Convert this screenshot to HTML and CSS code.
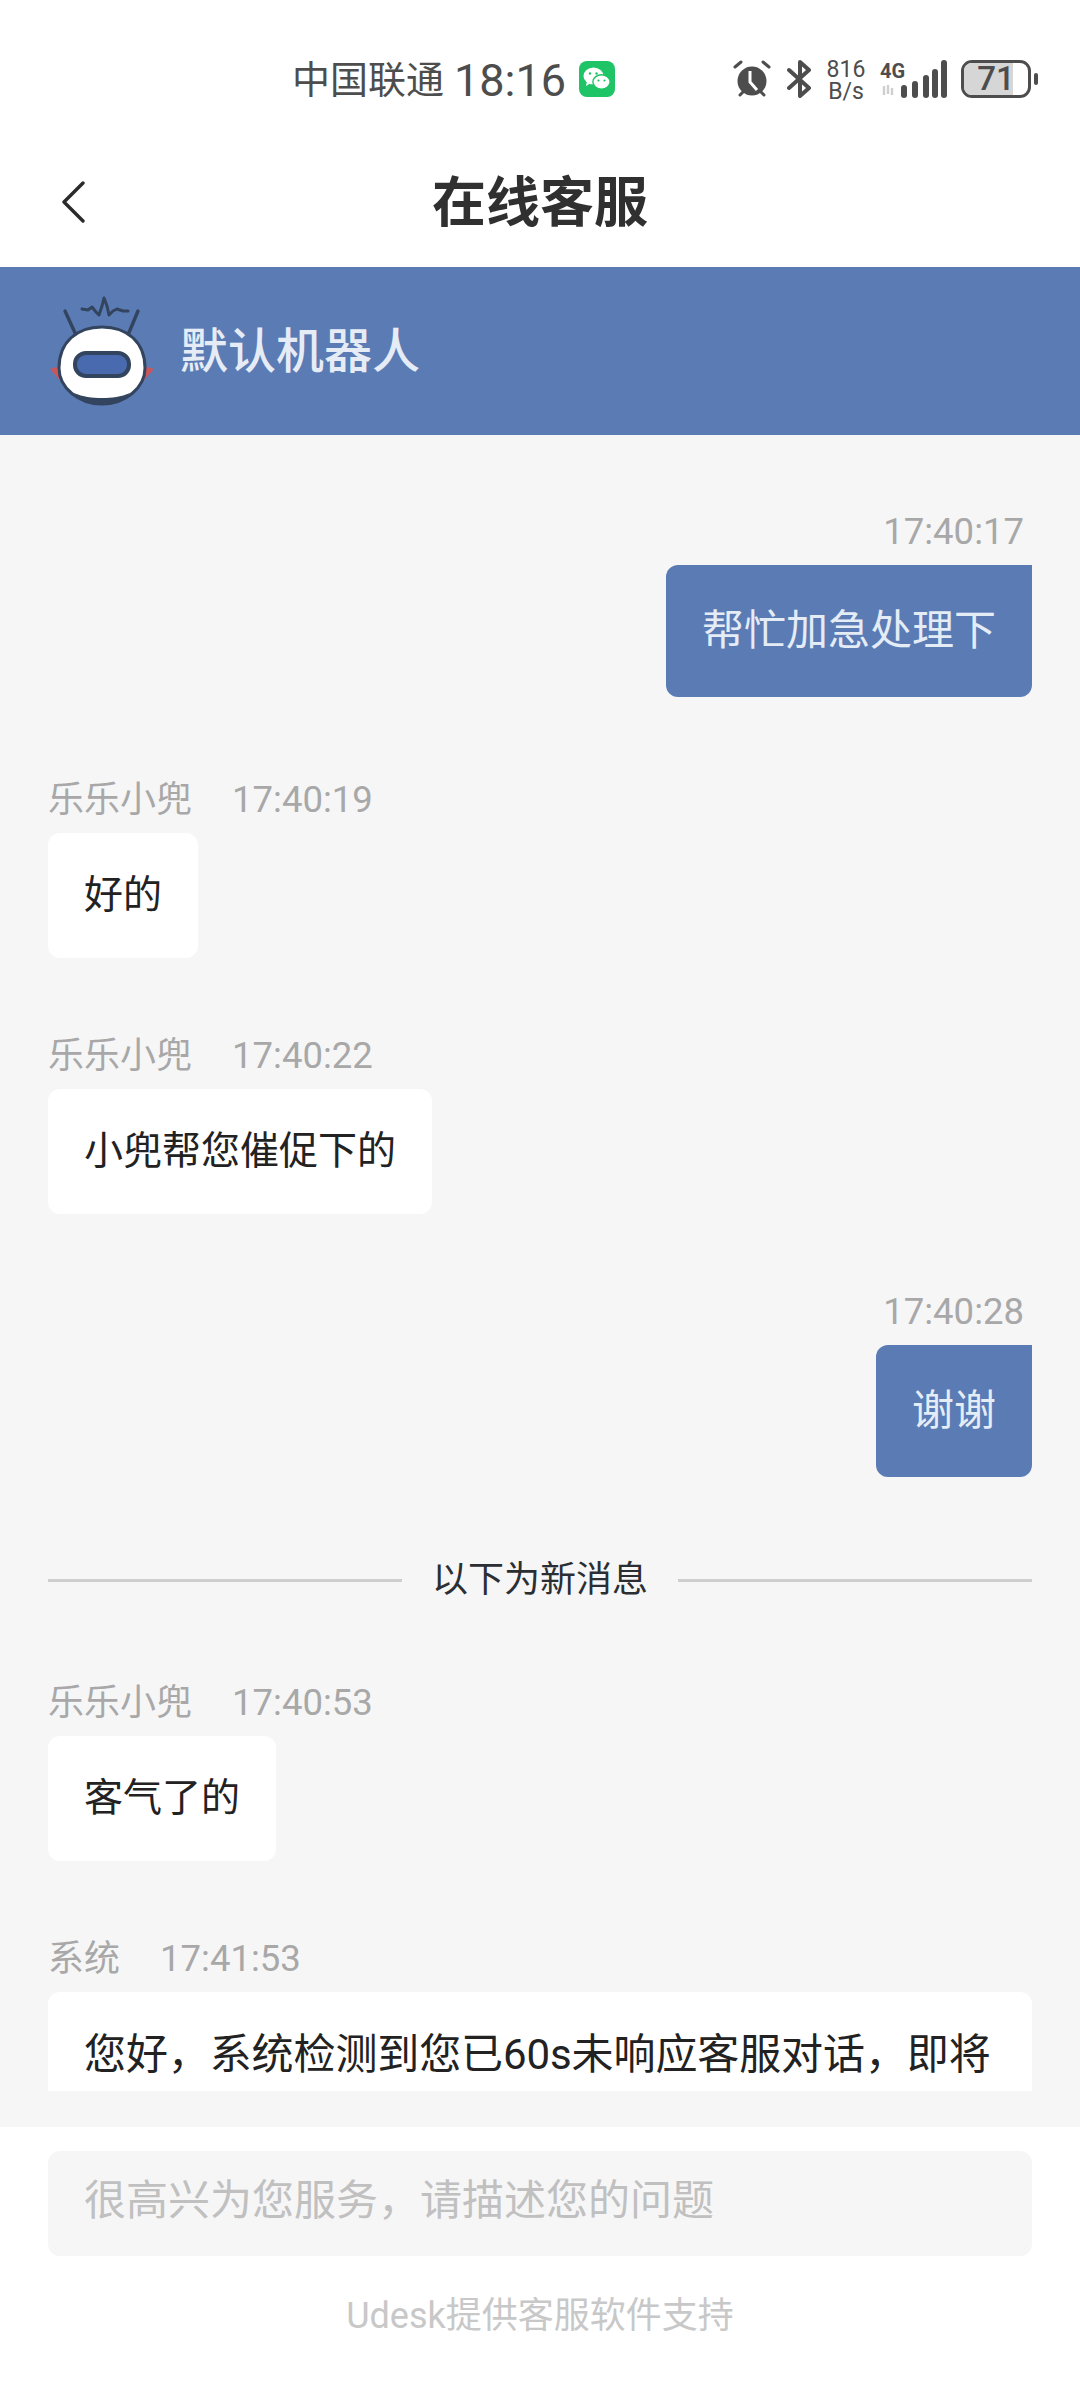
FILE: index.html
```html
<!DOCTYPE html>
<html lang="zh-CN">
<head>
    <meta charset="UTF-8">
    <meta name="viewport" content="width=device-width, initial-scale=1.0">
    <title>在线客服</title>
    <link rel="stylesheet" href="styles.css">
</head>
<body>
    <div class="page">
        <div class="status-bar">
            <span class="carrier">中国联通</span>
            <span class="clock">18:16</span>
            <svg class="wechat" viewBox="0 0 36 36">
                <rect width="36" height="36" rx="8" fill="#1fc466"/>
                <ellipse cx="14.5" cy="15" rx="10" ry="8.6" fill="#fff"/>
                <path d="M8 20l-1 5 5-3z" fill="#fff"/>
                <ellipse cx="22.5" cy="21" rx="8.6" ry="7.2" fill="#fff" stroke="#1fc466" stroke-width="1.4"/>
                <circle cx="11" cy="12.5" r="1.2" fill="#1fc466"/>
                <circle cx="17.5" cy="12.5" r="1.2" fill="#1fc466"/>
                <circle cx="19.5" cy="19.5" r="1.1" fill="#1fc466"/>
                <circle cx="25.5" cy="19.5" r="1.1" fill="#1fc466"/>
            </svg>
            <div class="status-right">
                <svg class="ic-alarm" viewBox="0 0 38 38">
                    <circle cx="19" cy="21" r="14.5" fill="#4d4d4d"/>
                    <path d="M2 7l6-5M36 7l-6-5M7 35l3-3M31 35l-3-3" stroke="#4d4d4d" stroke-width="3" stroke-linecap="round"/>
                    <path d="M17 11v11l7 8" fill="none" stroke="#fff" stroke-width="3"/>
                </svg>
                <svg class="ic-bt" viewBox="0 0 25 38">
                    <path d="M2 10l20 18-9 8V2l9 8L2 28" fill="none" stroke="#4d4d4d" stroke-width="4" stroke-linejoin="round" stroke-linecap="round"/>
                </svg>
                <div class="speed"><span>816</span><span>B/s</span></div>
                <svg class="ic-signal" viewBox="0 0 68 38">
                    <text x="0" y="18" class="net-label">4G</text>
                    <path d="M4 26v9M8 34l0-9M12 28v7" stroke="#cfcfcf" stroke-width="2.4" fill="none"/>
                    <g fill="none" stroke="#4d4d4d" stroke-width="6" stroke-linecap="round">
                        <path d="M24 28v7"/>
                        <path d="M35 24v11"/>
                        <path d="M46 18v17"/>
                        <path d="M55 12v23"/>
                        <path d="M64 3v32"/>
                    </g>
                </svg>
                <div class="battery">
                    <div class="battery-body">
                        <div class="battery-level"></div>
                        <span class="battery-num">71</span>
                    </div>
                    <div class="battery-nub"></div>
                </div>
            </div>
        </div>

        <div class="nav-bar">
            <svg class="back" viewBox="0 0 24 42">
                <path d="M22 2L3 21l19 19" fill="none" stroke="#2b2b2b" stroke-width="3.4" stroke-linecap="round" stroke-linejoin="round"/>
            </svg>
            <div class="nav-title">在线客服</div>
        </div>

        <div class="agent-bar">
            <svg class="robot" viewBox="0 0 104 110">
                <path d="M15 15l11 24M88 15L78 39" stroke="#33445f" stroke-width="3.4" stroke-linecap="round"/>
                <path d="M32 13l6 1 4-3 4 5 3 3 3-9 2-8 3 8 2 9 4-4 4-2 6 2 5 0" fill="none" stroke="#33445f" stroke-width="3" stroke-linejoin="round" stroke-linecap="round"/>
                <path d="M0 73l11-3 3 19zM104 73l-11-3-3 19z" fill="#c9565a"/>
                <path d="M52 31C27 31 9 46 9 72c0 20 20 36 43 36s43-16 43-36C95 46 77 31 52 31z" fill="#fff" stroke="#33445f" stroke-width="3"/>
                <path d="M24 97c9 9 18 12 28 12s19-3 28-12c-9 4-18 5-28 5s-19-1-28-5z" fill="#33445f"/>
                <rect x="25" y="57" width="54" height="23" rx="11" fill="#4a6ab0" stroke="#33445f" stroke-width="4"/>
            </svg>
            <div class="agent-name">默认机器人</div>
        </div>

        <div class="chat">
            <div class="chat-scroll">
                <div class="msg msg-right">
                    <div class="meta"><span class="time">17:40:17</span></div>
                    <div class="bubble bubble-me">帮忙加急处理下</div>
                </div>
                <div class="msg">
                    <div class="meta"><span class="who">乐乐小兜</span><span class="time">17:40:19</span></div>
                    <div class="bubble">好的</div>
                </div>
                <div class="msg">
                    <div class="meta"><span class="who">乐乐小兜</span><span class="time">17:40:22</span></div>
                    <div class="bubble">小兜帮您催促下的</div>
                </div>
                <div class="msg msg-right">
                    <div class="meta"><span class="time">17:40:28</span></div>
                    <div class="bubble bubble-me">谢谢</div>
                </div>
                <div class="divider"><span>以下为新消息</span></div>
                <div class="msg">
                    <div class="meta"><span class="who">乐乐小兜</span><span class="time">17:40:53</span></div>
                    <div class="bubble">客气了的</div>
                </div>
                <div class="msg msg-wide">
                    <div class="meta"><span class="who">系统</span><span class="time">17:41:53</span></div>
                    <div class="bubble bubble-wide">您好，系统检测到您已60s未响应客服对话，即将</div>
                </div>
            </div>
        </div>

        <div class="footer">
            <div class="input-box">很高兴为您服务，请描述您的问题</div>
            <div class="powered">Udesk提供客服软件支持</div>
        </div>
    </div>
</body>
</html>
```

FILE: styles.css
```css
body {
    margin: 0;
    padding: 0;
    font-family: Roboto, "Noto Sans CJK SC", sans-serif;
    background-color: #fff;
    color: #222;
}
.page {
    width: 1080px;
    height: 2400px;
    display: flex;
    flex-direction: column;
    overflow: hidden;
}
.status-bar {
    height: 120px;
    box-sizing: border-box;
    padding: 38px 42px 0 292px;
    display: flex;
    align-items: center;
    flex-shrink: 0;
    color: #4d4d4d;
}
.carrier {
    font-size: 38px;
    margin-top: -5px;
}
.clock {
    font-size: 45px;
    margin: 2px 0 0 10px;
}
.wechat {
    width: 36px;
    height: 36px;
    margin-left: 13px;
}
.status-right {
    margin-left: auto;
    display: flex;
    align-items: center;
}
.ic-alarm {
    width: 38px;
    height: 38px;
}
.ic-bt {
    width: 25px;
    height: 38px;
    margin-left: 16px;
}
.speed {
    display: flex;
    flex-direction: column;
    align-items: center;
    width: 42px;
    margin: 3px 0 0 13px;
    font-size: 23px;
    line-height: 22px;
}
.ic-signal {
    width: 68px;
    height: 38px;
    margin-left: 13px;
}
.net-label {
    font-family: Roboto, sans-serif;
    font-size: 20px;
    font-weight: 700;
    fill: #4d4d4d;
}
.battery {
    display: flex;
    align-items: center;
    margin-left: 13px;
}
.battery-body {
    position: relative;
    width: 70px;
    height: 38px;
    box-sizing: border-box;
    border: 3px solid #4d4d4d;
    border-radius: 11px;
    overflow: hidden;
    display: flex;
    align-items: center;
    justify-content: center;
}
.battery-level {
    position: absolute;
    left: 0;
    top: 0;
    bottom: 0;
    width: 77%;
    background-color: #d6d6d6;
}
.battery-num {
    position: relative;
    font-size: 33px;
    font-weight: 500;
    line-height: 32px;
}
.battery-nub {
    width: 4px;
    height: 12px;
    margin-left: 3px;
    background-color: #4d4d4d;
    border-radius: 2px;
}
.nav-bar {
    height: 147px;
    flex-shrink: 0;
    position: relative;
    display: flex;
    align-items: center;
    justify-content: center;
}
.back {
    position: absolute;
    left: 61px;
    top: 61px;
    width: 24px;
    height: 42px;
}
.nav-title {
    font-size: 54px;
    font-weight: 700;
    color: #303030;
    margin-top: 10px;
}
.agent-bar {
    height: 168px;
    flex-shrink: 0;
    box-sizing: border-box;
    padding-left: 50px;
    display: flex;
    align-items: center;
    background-color: #5b7bb4;
}
.robot {
    width: 104px;
    height: 110px;
}
.agent-name {
    margin: -8px 0 0 26px;
    font-size: 48px;
    font-weight: 500;
    color: #e6ecf6;
}
.chat {
    flex: 1;
    min-height: 0;
    display: flex;
    flex-direction: column;
    box-sizing: border-box;
    padding-bottom: 36px;
    background-color: #f6f6f7;
}
.chat-scroll {
    flex: 1;
    min-height: 0;
    overflow: hidden;
    box-sizing: border-box;
    padding: 70px 48px 0;
}
.msg {
    display: flex;
    flex-direction: column;
    align-items: flex-start;
    margin-bottom: 71px;
}
.msg-right {
    align-items: flex-end;
    margin-bottom: 76px;
}
.msg-right .meta {
    padding-right: 8px;
}
.msg-wide {
    align-items: stretch;
}
.meta {
    display: flex;
    align-items: baseline;
    height: 50px;
    line-height: 53px;
    margin-bottom: 10px;
    font-size: 36px;
    color: #a8a8a8;
}
.time {
    font-size: 36.5px;
}
.who {
    margin-right: 40px;
}
.bubble {
    box-sizing: border-box;
    padding: 0 36px;
    height: 125px;
    line-height: 124px;
    font-size: 39px;
    color: #222;
    background-color: #fff;
    border-radius: 12px;
    white-space: nowrap;
}
.bubble-me {
    height: 132px;
    line-height: 132px;
    font-size: 42px;
    color: #e4ecf6;
    background-color: #5b7bb4;
    border-radius: 12px 0 12px 12px;
}
.bubble-wide {
    padding-top: 33px;
    line-height: 60px;
    font-size: 42px;
    letter-spacing: -0.1px;
}
.divider {
    display: flex;
    align-items: center;
    gap: 30px;
    padding-top: 2px;
    margin-bottom: 71px;
    font-size: 36px;
    line-height: 50px;
    color: #2b2f33;
}
.divider::before,
.divider::after {
    content: "";
    flex: 1;
    height: 3px;
    background-color: #cfcfcf;
}
.footer {
    height: 273px;
    flex-shrink: 0;
    box-sizing: border-box;
    padding: 24px 48px 0;
}
.input-box {
    height: 105px;
    line-height: 100px;
    padding-left: 36px;
    font-size: 42px;
    color: #c0c0c0;
    background-color: #f6f6f7;
    border-radius: 12px;
}
.powered {
    margin-top: 35px;
    font-size: 36px;
    line-height: 50px;
    text-align: center;
    color: #c8c8c8;
}
```
